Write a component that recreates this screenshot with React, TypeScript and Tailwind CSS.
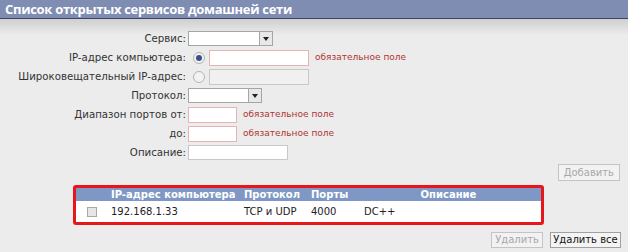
import { ReactNode } from 'react';

const font = { fontFamily: '"DejaVu Sans", Verdana, sans-serif' };

function Row({ label, children }: { label: string; children: ReactNode }) {
  return (
    <div className="flex items-center h-[19px]">
      <div className="w-[188px] pr-[2px] text-right text-[10.2px] text-[#333] whitespace-nowrap">{label}</div>
      <div className="flex items-center gap-[6px]">{children}</div>
    </div>
  );
}

function Select({ width }: { width: string }) {
  return (
    <div className={`flex h-[15px] ${width} border border-[#a5a5a5] bg-white`}>
      <div className="flex-1" />
      <div className="w-[13px] border-l border-[#a5a5a5] bg-[#e8e8e8] flex items-center justify-center">
        <div className="w-0 h-0 border-l-[3px] border-r-[3px] border-t-[4px] border-l-transparent border-r-transparent border-t-[#222]" />
      </div>
    </div>
  );
}

function Radio({ checked }: { checked?: boolean }) {
  return (
    <div className="w-[12px] h-[12px] ml-[5px] mr-[-2px] rounded-full border border-[#b4b4b4] bg-[#f2f2f2] flex items-center justify-center">
      {checked && <div className="w-[6px] h-[6px] rounded-full bg-[#3a4f8c]" />}
    </div>
  );
}

function Required() {
  return <span className="text-[9px] text-[#b03434] whitespace-nowrap">обязательное поле</span>;
}

export default function App() {
  return (
    <div className="w-[628px] h-[252px] overflow-hidden bg-[#ececec]" style={font}>
      <div className="h-[19px] bg-[#7f8db3] border-b border-[#3c4560] pl-[5px] flex items-center">
        <h1 className="text-[13px] font-bold text-white leading-none tracking-[-0.3px]" style={{ fontFamily: '"Open Sans", sans-serif' }}>
          Список открытых сервисов домашней сети
        </h1>
      </div>
      <div className="bg-gradient-to-b from-[#cfcfcf] to-[#ececec] to-[16px] pt-[10px]">
        <Row label="Сервис:">
          <Select width="w-[85px]" />
        </Row>
        <Row label="IP-адрес компьютера:">
          <Radio checked />
          <div className="w-[100px] h-[16px] border border-[#e6b4b4] bg-white" />
          <Required />
        </Row>
        <Row label="Широковещательный IP-адрес:">
          <Radio />
          <div className="w-[100px] h-[16px] border border-[#c8c8c8] bg-[#f0f0f0]" />
        </Row>
        <Row label="Протокол:">
          <Select width="w-[74px]" />
        </Row>
        <Row label="Диапазон портов от:">
          <div className="w-[49px] h-[16px] border border-[#e6b4b4] bg-white" />
          <Required />
        </Row>
        <Row label="до:">
          <div className="w-[49px] h-[16px] border border-[#e6b4b4] bg-white" />
          <Required />
        </Row>
        <Row label="Описание:">
          <div className="w-[100px] h-[15px] border border-[#c8c8c8] bg-white" />
        </Row>
        <div className="flex justify-end pr-[8px] mt-[2px]">
          <button className="h-[17px] px-[5px] border border-[#c4c4c4] bg-[#f2f2f2] text-[10px] text-[#a8a8a8] leading-none">Добавить</button>
        </div>
        <div className="ml-[73px] mt-[4px] w-[471px] border-[3px] border-[#e8151d] rounded-[3px]">
          <div className="grid grid-cols-[30px_138px_67px_45px_1fr] h-[13px] bg-[#7e97c4] text-[10px] font-bold text-white items-center leading-none">
            <div />
            <div className="pl-[5px]">IP-адрес компьютера</div>
            <div>Протокол</div>
            <div>Порты</div>
            <div className="text-center">Описание</div>
          </div>
          <div className="grid grid-cols-[30px_138px_67px_45px_1fr] h-[21px] bg-white text-[10px] text-[#222] items-center leading-none">
            <div className="flex justify-end pr-[9px]">
              <div className="w-[10px] h-[10px] border border-[#a8a8a8] bg-[#e6e6e6]" />
            </div>
            <div className="pl-[5px]">192.168.1.33</div>
            <div>TCP и UDP</div>
            <div>4000</div>
            <div className="pl-[8px]">DC++</div>
          </div>
        </div>
        <div className="flex justify-end gap-[7px] pr-[7px] mt-[7px]">
          <button className="h-[16px] w-[52px] border border-[#c4c4c4] bg-[#f2f2f2] text-[10px] text-[#a8a8a8] leading-none">Удалить</button>
          <button className="h-[16px] w-[71px] border border-[#a0a0a0] bg-[#f4f4f4] text-[10px] text-[#111] leading-none">Удалить все</button>
        </div>
      </div>
    </div>
  );
}
